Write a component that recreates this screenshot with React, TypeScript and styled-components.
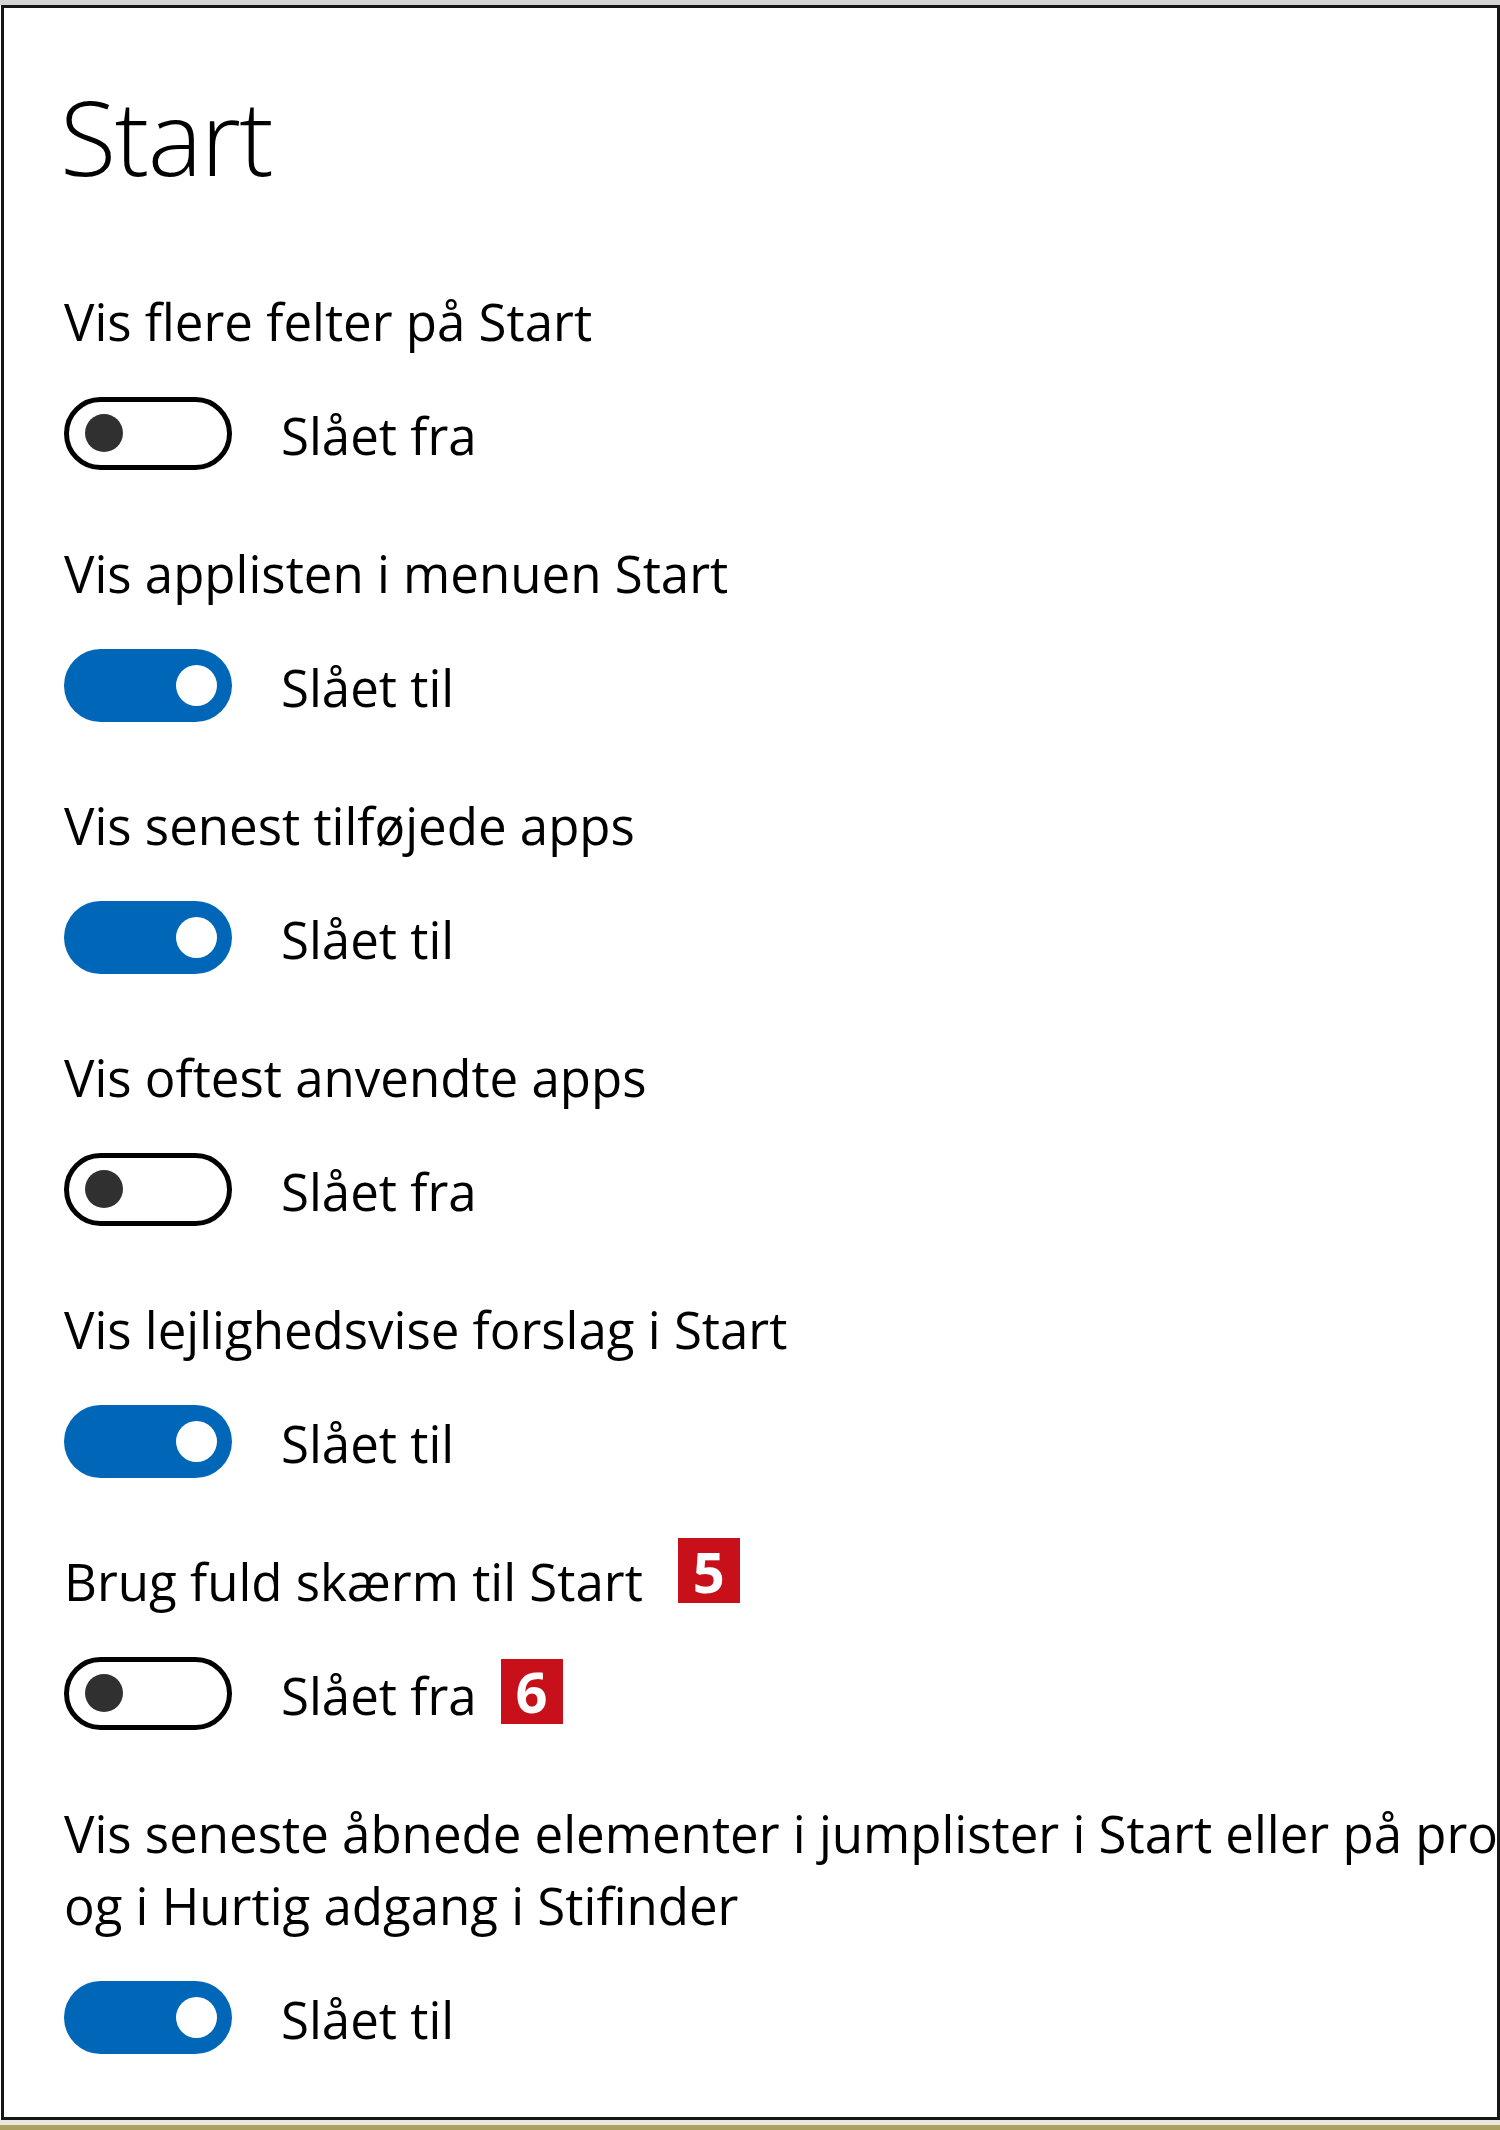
import styled, { createGlobalStyle } from "styled-components";

const GlobalStyle = createGlobalStyle`
  html, body {
    margin: 0;
    padding: 0;
    background: #ffffff;
  }
  body {
    font-family: "Open Sans", "Noto Sans", "Liberation Sans", sans-serif;
    color: #000;
  }
`;

const Screen = styled.div`
  width: 1500px;
  height: 2130px;
  border-top: 5px solid #d4d4d4;
  box-sizing: border-box;
  display: flex;
  flex-direction: column;
`;

const Panel = styled.div`
  height: 2115px;
  margin-left: 1px;
  box-sizing: border-box;
  border: 3px solid #161616;
  background: #fff;
  overflow: hidden;
  padding: 66px 0 0 60px;
  display: flex;
  flex-direction: column;
`;

const Footer = styled.div`
  height: 10px;
  border-top: 5px solid #e7e7e0;
  box-sizing: border-box;
  background: #aca061;
`;

const Title = styled.h1`
  margin: 0 0 86px -4px;
  font-size: 103px;
  font-weight: 300;
  line-height: 125px;
  letter-spacing: -1.5px;
`;

const Section = styled.div`
  display: flex;
  flex-direction: column;
  margin-bottom: 68px;
`;

const LabelRow = styled.div`
  display: flex;
  align-items: flex-start;
  gap: 35px;
  margin-bottom: 40px;
`;

const Label = styled.div`
  font-size: 51px;
  line-height: 72px;
  white-space: nowrap;
`;

const ToggleRow = styled.div`
  display: flex;
  align-items: center;
  height: 72px;
`;

const Track = styled.div<{ $on: boolean }>`
  width: 168px;
  height: 73px;
  box-sizing: border-box;
  border-radius: 37px;
  display: flex;
  align-items: center;
  justify-content: ${(p) => (p.$on ? "flex-end" : "flex-start")};
  padding: ${(p) => (p.$on ? "0 15px" : "0 16px")};
  background: ${(p) => (p.$on ? "#0067b8" : "#ffffff")};
  border: ${(p) => (p.$on ? "none" : "5px solid #000")};
`;

const Knob = styled.div<{ $on: boolean }>`
  width: ${(p) => (p.$on ? 41 : 38)}px;
  height: ${(p) => (p.$on ? 41 : 38)}px;
  border-radius: 50%;
  background: ${(p) => (p.$on ? "#ffffff" : "#303030")};
`;

const Status = styled.span`
  margin-left: 49px;
  font-size: 51px;
  line-height: 72px;
  padding-top: 4px;
`;

const Badge = styled.span<{ $lift: number; $gap: number }>`
  width: 62px;
  height: 65px;
  margin-top: ${(p) => -p.$lift}px;
  margin-left: ${(p) => p.$gap}px;
  background: #c8101a;
  color: #fff;
  font-size: 56px;
  font-weight: 700;
  line-height: 1;
  display: flex;
  align-items: center;
  justify-content: center;
`;

type Setting = {
  label: string[];
  on: boolean;
  labelBadge?: string;
  statusBadge?: string;
};

const settings: Setting[] = [
  { label: ["Vis flere felter på Start"], on: false },
  { label: ["Vis applisten i menuen Start"], on: true },
  { label: ["Vis senest tilføjede apps"], on: true },
  { label: ["Vis oftest anvendte apps"], on: false },
  { label: ["Vis lejlighedsvise forslag i Start"], on: true },
  {
    label: ["Brug fuld skærm til Start"],
    on: false,
    labelBadge: "5",
    statusBadge: "6",
  },
  {
    // first line runs past the panel edge and is cut by the frame, as in the original
    label: [
      "Vis seneste åbnede elementer i jumplister i Start eller på proceslinjen",
      "og i Hurtig adgang i Stifinder",
    ],
    on: true,
  },
];

export default function App() {
  return (
    <>
      <GlobalStyle />
      <Screen>
        <Panel>
          <Title>Start</Title>
          {settings.map((s) => (
            <Section key={s.label[0]}>
              <LabelRow>
                <Label>
                  {s.label.map((line, i) => (
                    <div key={i}>{line}</div>
                  ))}
                </Label>
                {s.labelBadge && (
                  <Badge $lift={7} $gap={0}>
                    {s.labelBadge}
                  </Badge>
                )}
              </LabelRow>
              <ToggleRow>
                <Track $on={s.on}>
                  <Knob $on={s.on} />
                </Track>
                <Status>{s.on ? "Slået til" : "Slået fra"}</Status>
                {s.statusBadge && (
                  <Badge $lift={4} $gap={24}>
                    {s.statusBadge}
                  </Badge>
                )}
              </ToggleRow>
            </Section>
          ))}
        </Panel>
        <Footer />
      </Screen>
    </>
  );
}
